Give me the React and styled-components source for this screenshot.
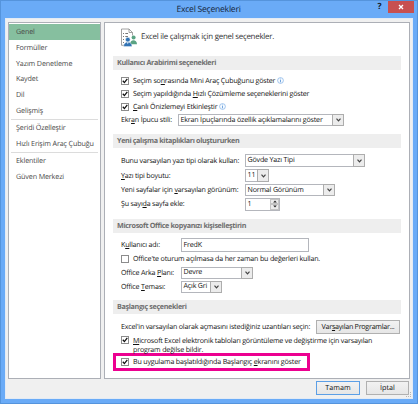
import React from 'react';
import styled, { createGlobalStyle } from 'styled-components';
//
const GlobalStyle = createGlobalStyle`
    * {
        box-sizing: border-box;
    }

    body {
        margin: 0;
        overflow: hidden;
        font-family: 'Open Sans', 'Noto Sans', sans-serif;
        font-size: 7.1px;
        line-height: 1;
        letter-spacing: -0.18px;
        color: #111111;
        text-rendering: geometricPrecision;
    }
`;

const Window = styled.div`
    display: flex;
    flex-direction: column;
    width: 418px;
    height: 404px;
    padding: 0 4px 4px;
    background-color: #6aabf7;
    border: 1px solid #5594dc;
`;

const TitleBar = styled.header`
    display: grid;
    grid-template-columns: 1fr auto 1fr;
    flex: none;
    height: 17px;
    margin-right: -1px;
`;

const WindowTitle = styled.h1`
    margin: 0;
    padding: 2px 2px 0 0;
    font-weight: 400;
    font-size: 8.6px;
    line-height: 13px;
    letter-spacing: -0.25px;
    color: #14253a;
`;

const WindowButtons = styled.div`
    display: flex;
    justify-content: flex-end;
`;

const HelpButton = styled.span`
    width: 17px;
    line-height: 12px;
    font-size: 8.5px;
    font-weight: 700;
    text-align: center;
    color: #14202e;
`;

const CloseButton = styled.span`
    display: flex;
    align-items: center;
    justify-content: center;
    width: 26px;
    height: 12px;
    background-color: #c75050;
`;

const Client = styled.div`
    display: flex;
    flex-direction: column;
    flex: 1;
    padding: 3px 2px 3px 2px;
    background-color: #f0f0f0;
    border: 1px solid #e3ebf5;
`;

const Panels = styled.div`
    display: flex;
    gap: 3px;
    height: 357px;
`;

const Sidebar = styled.nav`
    width: 93px;
    padding: 1px 0 0;
    background-color: #ffffff;
    border: 1px solid #acafb6;
`;

const SidebarItem = styled.div`
    height: 15.8px;
    padding-left: 7px;
    line-height: 17.4px;
    font-size: 7.2px;
    white-space: nowrap;
    letter-spacing: -0.15px;
    color: #4a4a4a;
    background-color: ${p => (p.$active ? '#86bf9f' : 'transparent')};
`;

const Separator = styled.div`
    height: 1px;
    margin: 0 2px 0.4px;
    background-color: #dcdcdc;
`;

const Content = styled.main`
    width: 306px;
    padding: 0 8px;
    background-color: #ffffff;
    border: 1px solid #acafb6;
`;

const Intro = styled.div`
    display: flex;
    align-items: center;
    gap: 4px;
    height: 33px;
    padding: 0 0 5px 8px;
    font-size: 7.9px;
    letter-spacing: -0.25px;
    color: #333333;
`;

const IntroText = styled.p`
    margin: 0;
    padding-top: 2px;
`;

const SectionTitle = styled.h2`
    height: 14px;
    margin: 0;
    padding-left: 4px;
    line-height: 15px;
    font-size: 7.2px;
    font-weight: 700;
    letter-spacing: -0.35px;
    color: #6e6e6e;
    background-color: #eeeeee;
`;

const SectionBody = styled.div`
    height: ${p => p.$height}px;
    padding: ${p => p.$top}px 0 0 8px;
`;

const Row = styled.div`
    display: flex;
    align-items: ${p => p.$align || 'center'};
    height: ${p => p.$height}px;
    padding-top: ${p => p.$top || 0}px;
`;

const Label = styled.label`
    flex: none;
    width: ${p => (p.$width ? `${p.$width}px` : 'auto')};
    padding-top: ${p => (p.$multiline ? 0.5 : 1.5)}px;
    line-height: 9.5px;
    white-space: nowrap;

    u {
        text-underline-offset: 1px;
        text-decoration-thickness: 0.7px;
        text-decoration-skip-ink: none;
    }
`;

const Box = styled.span`
    display: flex;
    flex: none;
    width: 8px;
    height: 8px;
    margin-right: 4px;
    background-color: #ffffff;
    border: 1px solid #8c8c8c;
`;

const Field = styled.div`
    display: flex;
    justify-content: space-between;
    align-items: center;
    width: ${p => p.$width}px;
    height: ${p => p.$height || 13}px;
    padding-left: 1.5px;
    white-space: nowrap;
    background-color: #ffffff;
    border: 1px solid #b4b6bc;
`;

const Value = styled.span`
    padding-top: 1px;
`;

const Arrow = styled.span`
    display: flex;
    align-items: center;
    justify-content: center;
    align-self: stretch;
    width: 12px;
    margin: -1px -1px -1px 0;
    background-color: #ececec;
    border: 1px solid #adadad;
`;

const Spinner = styled.span`
    display: flex;
    flex-direction: column;
    align-self: stretch;
    width: 9px;
`;

const SpinnerButton = styled.span`
    display: flex;
    flex: 1;
    align-items: center;
    justify-content: center;
    background-color: #ececec;
    border: 1px solid #c4c4c4;
`;

const Button = styled.button`
    width: ${p => p.$width}px;
    height: 14px;
    margin: 0;
    padding: 0;
    font-family: inherit;
    font-size: 7.2px;
    line-height: 12px;
    letter-spacing: ${p => p.$ls || 0}px;
    text-rendering: inherit;
    white-space: nowrap;
    color: #111111;
    background: linear-gradient(#f2f2f2, #e6e6e6);
    border: 1px solid ${p => (p.$primary ? '#5c9fe6' : '#b0b0b0')};
`;

const Highlight = styled.div`
    display: flex;
    align-items: center;
    width: 197px;
    height: 18px;
    margin-left: -8px;
    padding-left: 5px;
    border: 3px solid #ec0090;
`;

const Footer = styled.footer`
    display: flex;
    justify-content: flex-end;
    gap: 6px;
    position: relative;
    padding: 2px 1px 0 0;
`;

const Grip = styled.svg`
    position: absolute;
    right: -2px;
    bottom: -3px;
`;

const InfoIcon = styled.svg`
    flex: none;
    margin: 0 0 1px 2px;
`;

const CheckMark = () => (
    <svg width="6" height="6" viewBox="0 0 6 6">
        <path d="M0.8 2.8L2.4 4.6L5.3 0.9" fill="none" stroke="#111111" strokeWidth="1.3" />
    </svg>
);

const Checkbox = ({ checked }) => <Box>{checked && <CheckMark />}</Box>;

const Select = ({ width, height, children }) => (
    <Field $width={width} $height={height}>
        <Value>{children}</Value>
        <Arrow>
            <svg width="5" height="4" viewBox="0 0 5 4">
                <path d="M0.5 0.7L2.5 2.9L4.5 0.7" fill="none" stroke="#444444" strokeWidth="1.2" />
            </svg>
        </Arrow>
    </Field>
);

const Info = () => (
    <InfoIcon width="7" height="7" viewBox="0 0 7 7">
        <circle cx="3.5" cy="3.5" r="2.9" fill="#f7fbff" stroke="#7fb0e6" strokeWidth="0.7" />
        <path d="M3.5 1.7V2.4M3.5 3V5.3" stroke="#4f8fd6" strokeWidth="0.8" />
    </InfoIcon>
);

const OptionsIcon = () => (
    <svg width="16" height="19" viewBox="0 0 16 19">
        <path
            d="M0.5 17.3V1H8L11.5 4.5V7.5M8 1V4.5H11.5M0.5 17.3H3"
            fill="#ffffff"
            stroke="#8b8b8b"
            strokeWidth="0.8"
        />
        <path
            d="M2 5.5H3M2 8.5H3M2 11.5H3M2 14.5H3M4.3 5.5H7M4.3 8.5H7"
            stroke="#777777"
            strokeWidth="1"
        />
        <circle cx="12.6" cy="9.6" r="2" fill="#5aa383" />
        <path d="M9 16.3C9 10.8 16 10.8 16 16.3Z" fill="#5aa383" />
        <circle cx="6.8" cy="11.7" r="2.4" fill="#3274b5" stroke="#ffffff" strokeWidth="0.5" />
        <path d="M2.6 18.6C2.6 12.4 11 12.4 11 18.6Z" fill="#3274b5" stroke="#ffffff" strokeWidth="0.4" />
        <path d="M6 14.2H7.6L6.8 16.2Z" fill="#ffffff" />
    </svg>
);

const App = () => (
    <>
        <GlobalStyle />
        <Window>
            <TitleBar>
                <span />
                <WindowTitle>Excel Seçenekleri</WindowTitle>
                <WindowButtons>
                    <HelpButton>?</HelpButton>
                    <CloseButton>
                        <svg width="6" height="6" viewBox="0 0 6 6">
                            <path d="M1 1L5 5M5 1L1 5" stroke="#ffffff" strokeWidth="1.3" />
                        </svg>
                    </CloseButton>
                </WindowButtons>
            </TitleBar>
            <Client>
                <Panels>
                    <Sidebar>
                        <SidebarItem $active>Genel</SidebarItem>
                        <SidebarItem>Formüller</SidebarItem>
                        <SidebarItem>Yazım Denetleme</SidebarItem>
                        <SidebarItem>Kaydet</SidebarItem>
                        <SidebarItem>Dil</SidebarItem>
                        <SidebarItem>Gelişmiş</SidebarItem>
                        <Separator />
                        <SidebarItem>Şeridi Özelleştir</SidebarItem>
                        <SidebarItem>Hızlı Erişim Araç Çubuğu</SidebarItem>
                        <Separator />
                        <SidebarItem>Eklentiler</SidebarItem>
                        <SidebarItem>Güven Merkezi</SidebarItem>
                    </Sidebar>
                    <Content>
                        <Intro>
                            <OptionsIcon />
                            <IntroText>Excel ile çalışmak için genel seçenekler.</IntroText>
                        </Intro>

                        <SectionTitle>Kullanıcı Arabirimi seçenekleri</SectionTitle>
                        <SectionBody $height={64} $top={4}>
                            <Row $height={13}>
                                <Checkbox checked />
                                <Label>Seçim so<u>n</u>rasında Mini Araç Çubuğunu göster</Label>
                                <Info />
                            </Row>
                            <Row $height={13}>
                                <Checkbox checked />
                                <Label>Seçim yapıldığında <u>H</u>ızlı Çözümleme seçeneklerini göster</Label>
                            </Row>
                            <Row $height={13}>
                                <Checkbox checked />
                                <Label><u>C</u>anlı Önizlemeyi Etkinleştir</Label>
                                <Info />
                            </Row>
                            <Row $height={14}>
                                <Label $width={57}>Ekr<u>a</u>n İpucu stili:</Label>
                                <Select width={166} height={12}>Ekran İpuçlarında özellik açıklamalarını göster</Select>
                            </Row>
                        </SectionBody>

                        <SectionTitle>Yeni çalışma kitaplıkları oluştururken</SectionTitle>
                        <SectionBody $height={71} $top={5}>
                            <Row $height={15}>
                                <Label $width={124}>Bunu varsayılan yazı tipi olarak kullan:</Label>
                                <Select width={120}>Gövde Yazı Tipi</Select>
                            </Row>
                            <Row $height={15}>
                                <Label $width={124}><u>Y</u>azı tipi boyutu:</Label>
                                <Select width={24}>11</Select>
                            </Row>
                            <Row $height={14}>
                                <Label $width={124}>Yeni sayfalar için <u>v</u>arsayılan görünüm:</Label>
                                <Select width={90} height={12}>Normal Görünüm</Select>
                            </Row>
                            <Row $height={14}>
                                <Label $width={124}>Şu sayı<u>d</u>a sayfa ekle:</Label>
                                <Field $width={35}>
                                    <Value>1</Value>
                                    <Spinner>
                                        <SpinnerButton>
                                            <svg width="4" height="3" viewBox="0 0 4 3">
                                                <path d="M0.2 2.5L2 0.5L3.8 2.5Z" fill="#222222" />
                                            </svg>
                                        </SpinnerButton>
                                        <SpinnerButton>
                                            <svg width="4" height="3" viewBox="0 0 4 3">
                                                <path d="M0.2 0.5L2 2.5L3.8 0.5Z" fill="#222222" />
                                            </svg>
                                        </SpinnerButton>
                                    </Spinner>
                                </Field>
                            </Row>
                        </SectionBody>

                        <SectionTitle>Microsoft Office kopyanızı kişiselleştirin</SectionTitle>
                        <SectionBody $height={67} $top={5}>
                            <Row $height={14}>
                                <Label $width={60}>K<u>u</u>llanıcı adı:</Label>
                                <Field $width={128} $height={14}>
                                    <Value>FredK</Value>
                                </Field>
                            </Row>
                            <Row $height={13}>
                                <Checkbox />
                                <Label>Office'te oturum açılmasa da her zaman bu değerleri kullan.</Label>
                            </Row>
                            <Row $height={15}>
                                <Label $width={60}>Office Arka <u>P</u>lanı:</Label>
                                <Select width={72} height={12}>Devre</Select>
                            </Row>
                            <Row $height={13}>
                                <Label $width={60}>Office <u>T</u>eması:</Label>
                                <Select width={41} height={12}>Açık Gri</Select>
                            </Row>
                        </SectionBody>

                        <SectionTitle>Başlangıç seçenekleri</SectionTitle>
                        <SectionBody $height={60} $top={5}>
                            <Row $height={15}>
                                <Label $width={195}>Excel'in varsayılan olarak açmasını istediğiniz uzantıları seçin:</Label>
                                <Button $width={84} $ls={-0.28}>Var<u>s</u>ayılan Programlar...</Button>
                            </Row>
                            <Row $height={19} $top={2} $align="flex-start">
                                <Checkbox checked />
                                <Label $multiline>
                                    <u>M</u>icrosoft Excel elektronik tabloları görüntüleme ve değiştirme için varsayılan
                                    <br />
                                    program değilse bildir.
                                </Label>
                            </Row>
                            <Highlight>
                                <Checkbox checked />
                                <Label>Bu uygulama başlatıldığında Başlangıç <u>e</u>kranını göster</Label>
                            </Highlight>
                        </SectionBody>
                    </Content>
                </Panels>
                <Footer>
                    <Button $width={44} $primary>Tamam</Button>
                    <Button $width={43}>İptal</Button>
                    <Grip width="6" height="6" viewBox="0 0 6 6">
                        <path d="M4 0H5V1H4ZM2 2H3V3H2ZM4 2H5V3H4ZM0 4H1V5H0ZM2 4H3V5H2ZM4 4H5V5H4Z" fill="#b5b5b5" />
                    </Grip>
                </Footer>
            </Client>
        </Window>
    </>
);

export default App;
